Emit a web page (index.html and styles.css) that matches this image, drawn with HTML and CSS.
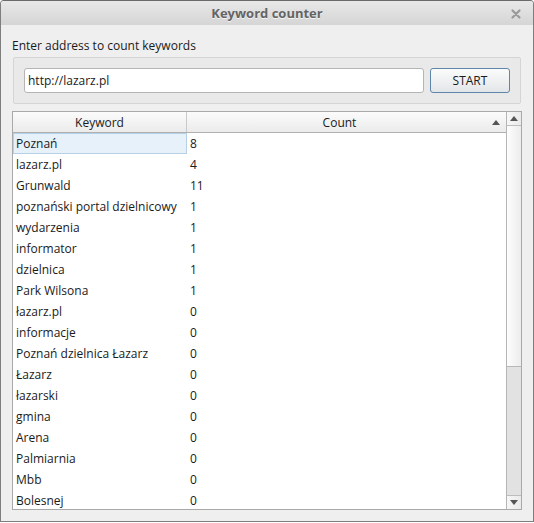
FILE: index.html
```html
<!DOCTYPE html>
<html>
<head>
<meta charset="utf-8">
<link rel="stylesheet" href="styles.css">
</head>
<body>
<div class="window">
  <div class="titlebar">
    <span class="title">Keyword counter</span>
    <svg class="close" width="10" height="10" viewBox="0 0 10 10"><path d="M1.5 1.5 L8.5 8.5 M8.5 1.5 L1.5 8.5" stroke="#9a9a9a" stroke-width="2.2" stroke-linecap="round"/></svg>
  </div>
  <div class="content">
    <div class="label">Enter address to count keywords</div>
    <div class="group">
      <div class="input">http://lazarz.pl</div>
      <div class="button">START</div>
    </div>
    <div class="table">
      <div class="grid-area">
        <div class="header">
          <div class="hcell kw">Keyword</div>
          <div class="hcell cnt">Count<svg class="sort" width="8" height="5" viewBox="0 0 8 5"><path d="M0 5 L4 0 L8 5 Z" fill="#555"/></svg></div>
        </div>
        <div class="rows">
          <div class="row"><div class="cell kw selected">Poznań</div><div class="cell cnt">8</div></div>
          <div class="row"><div class="cell kw">lazarz.pl</div><div class="cell cnt">4</div></div>
          <div class="row"><div class="cell kw">Grunwald</div><div class="cell cnt">11</div></div>
          <div class="row"><div class="cell kw">poznański portal dzielnicowy</div><div class="cell cnt">1</div></div>
          <div class="row"><div class="cell kw">wydarzenia</div><div class="cell cnt">1</div></div>
          <div class="row"><div class="cell kw">informator</div><div class="cell cnt">1</div></div>
          <div class="row"><div class="cell kw">dzielnica</div><div class="cell cnt">1</div></div>
          <div class="row"><div class="cell kw">Park Wilsona</div><div class="cell cnt">1</div></div>
          <div class="row"><div class="cell kw">łazarz.pl</div><div class="cell cnt">0</div></div>
          <div class="row"><div class="cell kw">informacje</div><div class="cell cnt">0</div></div>
          <div class="row"><div class="cell kw">Poznań dzielnica Łazarz</div><div class="cell cnt">0</div></div>
          <div class="row"><div class="cell kw">Łazarz</div><div class="cell cnt">0</div></div>
          <div class="row"><div class="cell kw">łazarski</div><div class="cell cnt">0</div></div>
          <div class="row"><div class="cell kw">gmina</div><div class="cell cnt">0</div></div>
          <div class="row"><div class="cell kw">Arena</div><div class="cell cnt">0</div></div>
          <div class="row"><div class="cell kw">Palmiarnia</div><div class="cell cnt">0</div></div>
          <div class="row"><div class="cell kw">Mbb</div><div class="cell cnt">0</div></div>
          <div class="row"><div class="cell kw">Bolesnej</div><div class="cell cnt">0</div></div>
        </div>
      </div>
      <div class="scrollbar">
        <div class="sbtn up"><svg width="8" height="5" viewBox="0 0 8 5"><path d="M0 5 L4 0 L8 5 Z" fill="#555"/></svg></div>
        <div class="handle"></div>
        <div class="trough"></div>
        <div class="sbtn down"><svg width="8" height="5" viewBox="0 0 8 5"><path d="M0 0 L4 5 L8 0 Z" fill="#555"/></svg></div>
      </div>
    </div>
  </div>
</div>
</body>
</html>
```

FILE: styles.css
```css
* { box-sizing: border-box; }
html, body { margin: 0; padding: 0; }
body {
  width: 534px;
  height: 523px;
  background: #ffffff;
  font-family: "Open Sans", "Noto Sans", sans-serif;
  font-size: 12px;
  color: #1a1a1a;
  overflow: hidden;
}
.window {
  width: 534px;
  height: 522px;
  border: 1px solid #7e7e7e;
  border-top-color: #6a6a6a;
  border-radius: 4px 4px 0 0;
  background: #efefef;
  display: flex;
  flex-direction: column;
  overflow: hidden;
}
.titlebar {
  height: 24px;
  flex: none;
  background: linear-gradient(#e8e8e8, #d5d5d5);
  display: flex;
  align-items: center;
  justify-content: center;
  position: relative;
}
.title {
  font-weight: bold;
  font-size: 13px;
  color: #646464;
  text-shadow: 0 1px 0 #f4f4f4;
}
.close {
  position: absolute;
  right: 12px;
  top: 8px;
}
.content {
  flex: 1;
  padding: 13px 11px 11px 11px;
  display: flex;
  flex-direction: column;
  min-height: 0;
}
.label {
  line-height: 16px;
  height: 16px;
}
.group {
  margin: 3px 1px 0 1px;
  border: 1px solid #d5d5d5;
  border-radius: 2px;
  background: #e9e9e9;
  padding: 10px;
  display: flex;
  gap: 6px;
  height: 47px;
}
.input {
  flex: 1;
  height: 25px;
  background: #ffffff;
  border: 1px solid #b5b5b5;
  border-radius: 3px;
  line-height: 23px;
  padding-left: 3px;
}
.button {
  width: 80px;
  height: 25px;
  border: 1px solid #5f85aa;
  border-radius: 3px;
  background: linear-gradient(#fbfbfb, #e3e6e9);
  text-align: center;
  line-height: 23px;
}
.table {
  margin-top: 7px;
  flex: 1;
  min-height: 0;
  border: 1px solid #a9a9a9;
  background: #ffffff;
  display: flex;
  overflow: hidden;
}
.grid-area {
  flex: 1;
  display: flex;
  flex-direction: column;
  min-width: 0;
  overflow: hidden;
}
.header {
  display: flex;
  height: 21px;
  flex: none;
  background: linear-gradient(#fbfbfb, #ebebeb);
  border-bottom: 1px solid #b0b0b0;
}
.hcell {
  line-height: 20px;
  padding-top: 1px;
  text-align: center;
}
.hcell.kw {
  width: 174px;
  border-right: 1px solid #c9c9c9;
}
.hcell.cnt {
  flex: 1;
  position: relative;
  padding-right: 14px;
}
.sort {
  position: absolute;
  right: 6px;
  top: 8px;
}
.rows {
  display: flex;
  flex-direction: column;
}
.row {
  display: flex;
  height: 21px;
  flex: none;
}
.cell {
  line-height: 21px;
  padding-left: 3px;
  white-space: nowrap;
}
.cell.kw {
  width: 174px;
}
.cell.cnt {
  flex: 1;
}
.cell.selected {
  background: #e6f1fa;
  border: 1px solid #b6d0e6;
  line-height: 19px;
  padding-left: 2px;
  height: 21px;
}
.scrollbar {
  width: 15px;
  flex: none;
  border-left: 1px solid #b5b5b5;
  background: #efefef;
  display: flex;
  flex-direction: column;
}
.sbtn {
  height: 14px;
  flex: none;
  display: flex;
  align-items: center;
  justify-content: center;
  background: linear-gradient(90deg, #f7f7f7, #eaeaea);
}
.sbtn.up { border-bottom: 1px solid #bdbdbd; }
.sbtn.down { border-top: 1px solid #bdbdbd; }
.handle {
  height: 241px;
  flex: none;
  background: linear-gradient(90deg, #fdfdfd, #ececec);
  border-bottom: 1px solid #b8b8b8;
}
.trough {
  flex: 1;
  background: #e2e2e2;
}
```
